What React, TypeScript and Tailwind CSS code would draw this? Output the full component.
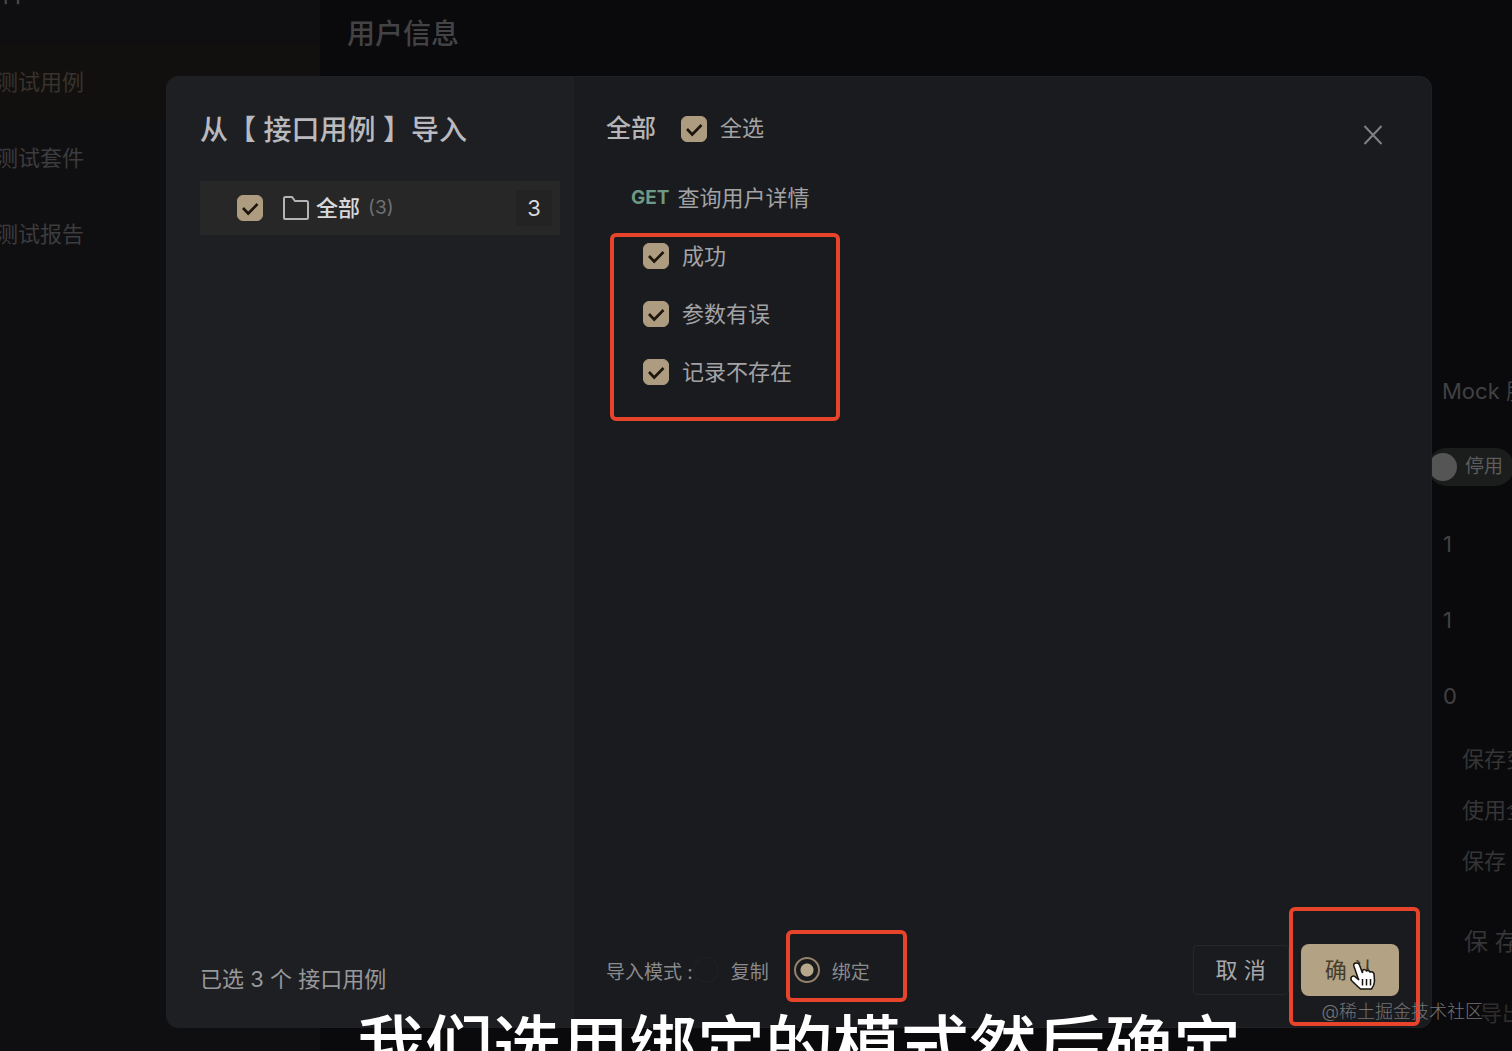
import { useState } from 'react';
import type { ReactNode } from 'react';

const menu = ['测试用例', '测试套件', '测试报告'];

const initialCases = [
  { id: 'ok', name: '成功', checked: true },
  { id: 'bad-params', name: '参数有误', checked: true },
  { id: 'not-found', name: '记录不存在', checked: true },
];

type CheckboxProps = {
  id: string;
  checked: boolean;
  onChange: (checked: boolean) => void;
  label?: string;
};

function Checkbox({ id, checked, onChange, label }: CheckboxProps) {
  return (
    <span className="grid shrink-0 place-items-center">
      <input
        id={id}
        type="checkbox"
        aria-label={label}
        checked={checked}
        onChange={(e) => onChange(e.target.checked)}
        className="peer col-start-1 row-start-1 size-[26px] appearance-none rounded-md border border-[#55524c] checked:border-[#ae9c80] checked:bg-[#ae9c80]"
      />
      <svg
        viewBox="0 0 26 26"
        className="pointer-events-none col-start-1 row-start-1 hidden size-[26px] fill-none stroke-[#1d160c] stroke-[2.6] peer-checked:block"
      >
        <path d="M6 13 11.2 18.500 20.500 9" />
      </svg>
    </span>
  );
}

function Mark({ className }: { className: string }) {
  return <span className={`pointer-events-none absolute rounded-md border-4 border-[#e8442b] ${className}`} />;
}

function Sidebar() {
  return (
    <aside className="w-80 shrink-0 bg-[#0f0f11]">
      <div className="h-11 overflow-hidden">
        <p className="-mt-[22px] h-7 text-[28px] leading-7 text-[#4a4a4c]">件</p>
      </div>
      <nav>
        {menu.map((item, i) => (
          <a
            key={item}
            href="#"
            className={`-ml-1 flex h-[76px] items-center text-[22px] ${i === 0 ? 'bg-[#12100f] text-[#38332d]' : 'text-[#3c3c3e]'}`}
          >
            {item}
          </a>
        ))}
      </nav>
    </aside>
  );
}

function Setting({ label, value }: { label: string; value: string }) {
  return (
    <div className="flex h-[76px] items-center pl-[11px]">
      <input aria-label={label} defaultValue={value} className="w-16 bg-transparent text-[22px] text-[#414143]" />
    </div>
  );
}

function Option({ children }: { children: ReactNode }) {
  return <p className="flex h-[51px] items-center pl-[30px]">{children}</p>;
}

function Background() {
  return (
    <div className="flex h-full">
      <Sidebar />
      <main className="flex min-w-0 flex-1 flex-col bg-[#0a0a0c]">
        <header className="flex h-[67px] items-center px-[27px] text-[28px] font-medium text-[#434345]">
          <h1>用户信息</h1>
        </header>
        <section className="mt-[286px] w-20 self-end overflow-hidden whitespace-nowrap text-[22px] text-[#353537]">
          <p className="flex h-[76px] items-center pl-[10px] text-[#414143]">Mock 服务</p>
          <div className="flex h-[76px] items-center">
            <button
              type="button"
              role="switch"
              aria-checked="false"
              className="-ml-1 flex h-[38px] w-[86px] shrink-0 items-center gap-2 rounded-full bg-[#1b1c1c] pl-[1px] text-[19px] text-[#5c5c5d]"
            >
              <span className="size-7 shrink-0 rounded-full bg-[#555555]" />
              停用
            </button>
          </div>
          <div className="pt-px">
            <Setting label="循环次数" value="1" />
            <Setting label="线程数" value="1" />
            <Setting label="延迟" value="0" />
          </div>
          <Option>保存变量</Option>
          <Option>使用全局</Option>
          <Option>保存 Cookie</Option>
          <button type="button" className="flex h-[110px] items-center pl-8 text-2xl">
            保 存
          </button>
          <button type="button" className="flex h-8 items-center pl-12 text-[#2f2c2b]">
            导出
          </button>
        </section>
      </main>
    </div>
  );
}

function ImportDialog() {
  const [cases, setCases] = useState(initialCases);
  const [mode, setMode] = useState('bind');

  const selected = cases.filter((c) => c.checked).length;
  const all = selected === cases.length;

  const toggleAll = (checked: boolean) => setCases(cases.map((c) => ({ ...c, checked })));
  const toggle = (id: string, checked: boolean) =>
    setCases(cases.map((c) => (c.id === id ? { ...c, checked } : c)));

  return (
    <div
      role="dialog"
      aria-labelledby="import-title"
      className="flex h-full overflow-hidden rounded-xl border border-[#1f2023] bg-[#1a1b1e] text-[#a3a3a6]"
    >
      <div className="flex w-[407px] shrink-0 flex-col bg-[#1e1f23] px-[33px]">
        <h2 id="import-title" className="mt-[33px] whitespace-pre text-[28px] leading-10 font-medium text-[#b9b9be]">
          从【 接口用例 】导入
        </h2>
        <div className="mt-[31px] -mr-5 flex h-[54px] w-[360px] items-center bg-[#272728] pr-2 pl-[37px]">
          <Checkbox id="tree-all" label="全部" checked={all} onChange={toggleAll} />
          <svg viewBox="0 0 28 26" className="ml-[19px] h-[26px] w-7 fill-none stroke-[#b4b4b6] stroke-2">
            <path d="M2 23V3.5Q2 2 3.500 2H10L13 6H24.500Q26 6 26 7.500V22.500Q26 24 24.500 24H3Q2 24 2 23Z" />
          </svg>
          <span className="ml-1.5 text-[22px] font-medium text-[#d8d8da]">全部</span>
          <span className="ml-2 text-[19px] text-[#707072]">(3)</span>
          <span className="ml-auto flex h-9 w-9 items-center justify-center rounded bg-[#232324] text-[22px] text-[#d8d8da]">
            3
          </span>
        </div>
        <p className="mt-auto mb-8 text-[22px] leading-8 text-[#98989b]">已选 {selected} 个 接口用例</p>
      </div>

      <div className="flex min-w-0 flex-1 flex-col px-8">
        <div className="flex h-[91px] items-center pt-3">
          <span className="text-[25px] font-medium text-[#b4b4b7]">全部</span>
          <div className="ml-[25px] flex items-center gap-[13px]">
            <Checkbox id="select-all" checked={all} onChange={toggleAll} />
            <label htmlFor="select-all" className="text-[22px]">
              全选
            </label>
          </div>
          <button type="button" aria-label="关闭" className="mr-4 ml-auto pt-3">
            <svg viewBox="0 0 20 20" className="size-5 fill-none stroke-[#808083] stroke-2">
              <path d="M1.500 1 18.500 19M18.500 1 1.500 19" />
            </svg>
          </button>
        </div>

        <p className="flex h-[59px] items-center gap-2 pt-0.5 pl-[25px] text-[22px]">
          <span className="text-[19px] font-bold text-[#6e9984]">GET</span>
          查询用户详情
        </p>
        <ul className="relative">
          {cases.map((c) => (
            <li key={c.id} className="flex h-[58px] items-center gap-[13px] pl-[37px]">
              <Checkbox id={c.id} checked={c.checked} onChange={(v) => toggle(c.id, v)} />
              <label htmlFor={c.id} className="text-[22px]">
                {c.name}
              </label>
            </li>
          ))}
          <Mark className="top-1.5 -bottom-5 left-1 w-[230px]" />
        </ul>

        <div className="mt-auto mb-[31px] flex items-center text-[19px] text-[#8a8a8c]">
          <span className="pt-1.5">导入模式 :</span>
          <label className="flex items-center gap-3">
            <input
              type="radio"
              name="mode"
              checked={mode === 'copy'}
              onChange={() => setMode('copy')}
              className="size-[26px] appearance-none rounded-full border border-[#212225] checked:border-2 checked:border-[#94836b]"
            />
            <span className="pt-1.5">复制</span>
          </label>
          <div className="relative ml-[25px]">
            <label className="flex items-center gap-3">
              <input
                type="radio"
                name="mode"
                checked={mode === 'bind'}
                onChange={() => setMode('bind')}
                className="size-[26px] appearance-none rounded-full border border-[#212225] checked:border-2 checked:border-[#94836b] checked:bg-[radial-gradient(circle,#b7a88b_6px,transparent_7px)]"
              />
              <span className="pt-1.5">绑定</span>
            </label>
            <Mark className="-top-[23px] -right-[37px] -left-[8px] h-[72px]" />
          </div>
          <div className="ml-auto flex items-center gap-3 text-[22px]">
            <button type="button" className="h-[50px] rounded border border-[#26272a] px-[22px] text-[#a8a8ab]">
              取 消
            </button>
            <div className="relative">
              <button type="button" className="h-[52px] rounded-lg bg-[#b3a384] px-6 text-[#463d2d]">
                确 认
              </button>
              <Mark className="-top-[37px] -right-[21px] -bottom-[30px] -left-[12px]" />
              <svg
                viewBox="0 0 28 30"
                className="pointer-events-none absolute top-[17px] left-12 h-[30px] w-7 fill-white stroke-[#17140f] stroke-[1.5]"
              >
                <path d="M9 17 5 5.500Q4 2 7 2T10.500 4L13.500 12V9.500Q15.500 7.500 17.500 10Q19.500 8.500 21 11Q24 10 25 13L25.500 20Q25.500 24 22.500 28H11.500Q8 25 2.500 19.500Q1 17 3 15.500T7 16.500L10 19Z" />
                <path d="M13.500 18V24.500M17.500 18V24.500M21.500 18V24.500" />
              </svg>
            </div>
          </div>
        </div>
      </div>
    </div>
  );
}

export default function App() {
  return (
    <div className="relative h-screen overflow-hidden bg-[#0a0a0c] font-['Inter','Noto_Sans_CJK_SC',sans-serif]">
      <Background />
      <div className="absolute inset-0 pt-[76px] pr-20 pb-[23px] pl-[166px]">
        <ImportDialog />
      </div>
      <p className="absolute right-[29px] bottom-[25px] text-lg leading-7 font-light text-[#747476]">
        @稀土掘金技术社区
      </p>
      <p className="absolute -bottom-[46px] left-[357px] whitespace-nowrap text-[68px] leading-[100px] font-medium text-white">
        我们选用绑定的模式然后确定
      </p>
    </div>
  );
}
